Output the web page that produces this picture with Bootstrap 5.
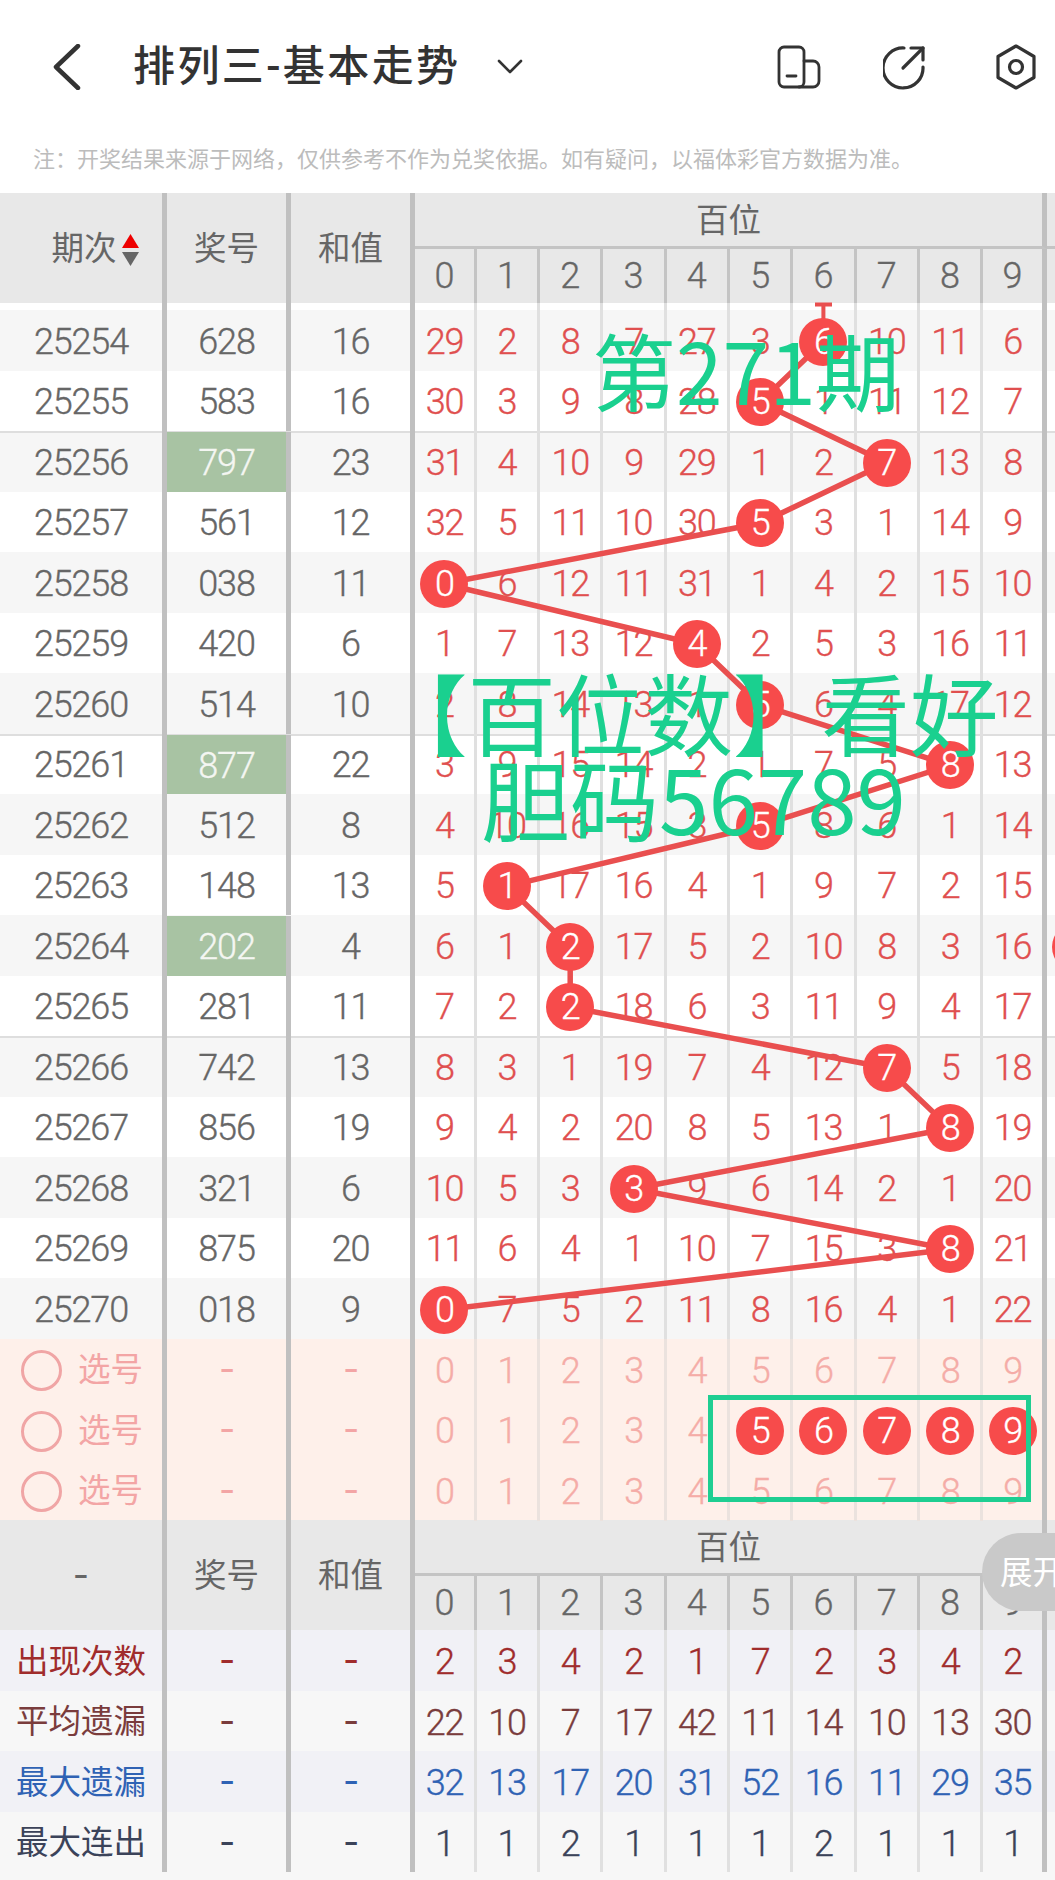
<!DOCTYPE html>
<html lang="zh-CN">
<head>
  <meta charset="UTF-8">
  <title>排列三-基本走势</title>
  <link href="https://cdn.jsdelivr.net/npm/bootstrap@5.3.0/dist/css/bootstrap.min.css" rel="stylesheet">
  <style>
    html, body { overflow: hidden; }
    body { width: 1055px; height: 1880px; background: #f7f7f7; font-family: Roboto, "Noto Sans CJK SC", sans-serif; color: #666; }
    .top-head { height: 134px; background: #fff; }
    .back-icon { margin-left: 53px; }
    .top-title { font-size: 42px; font-weight: 500; color: #333; letter-spacing: 2.4px; margin-left: 52px; line-height: 1; }
    .drop-icon { margin-left: 37px; }
    .share-icon { margin-left: 62px; }
    .hex-icon { margin-left: 68px; margin-right: 18px; }
    .top-note { height: 59px; background: #fff; font-size: 22px; color: #bcbcbc; padding: 10px 0 0 33px; line-height: 32px; }
    .chart-wrap { width: 1055px; overflow: hidden; }
    .trend-row { grid-template-columns: 167px 124px 124px 61.8px repeat(8, 63.3px) 63.8px 1fr; font-size: 36px; font-weight: 300; letter-spacing: -1.2px; height: 60.5px; -webkit-text-stroke: .35px currentColor; }
    .trend-row > div { display: flex; align-items: center; justify-content: center; min-width: 0; padding-top: 3px; }
    .c-main { border-right: 5px solid #c0c0c0; }
    .c-num { border-right: 3px solid #e0e0e0; color: #e04f4f; }
    .c-last { border-right: 5px solid #c0c0c0; color: #e04f4f; }
    .row-even { background: #f6f6f6; }
    .row-odd { background: #fff; }
    .row-group { box-shadow: inset 0 2px 0 #dedede; }
    .row-gap { height: 7px; background: #fff; }
    .hit-cell { background: #a8c3a3; color: #f4f6f2; margin-top: 1px; }
    .ball { width: 48px; height: 48px; flex: none; border-radius: 50%; background: #f74b4b; color: #fff; position: relative; z-index: 2; display: flex; align-items: center; justify-content: center; }
    .ball-edge { margin-left: 5px; }
    .c-rest { justify-content: flex-start !important; }
    .dash-mark { display: block; font-family: "Noto Sans CJK SC", sans-serif; font-size: 44px; font-weight: 400; line-height: 1; margin-bottom: 14px; -webkit-text-stroke: 0; }

    .head-grid { grid-template-columns: 167px 124px 124px 61.8px repeat(8, 63.3px) 63.8px 1fr; grid-template-rows: 56px 54px; background: #e8e8e8; font-size: 32.5px; }
    .head-grid > div { display: flex; align-items: center; justify-content: center; }
    .head-span { grid-row: span 2; padding-top: 3px; }
    .head-pos { grid-column: span 10; border-bottom: 3px solid #c4c4c4; border-right: 5px solid #c0c0c0; padding-top: 4px; }
    .head-end { border-bottom: 3px solid #c4c4c4; }
    .head-num { border-right: 3px solid #c4c4c4; font-size: 36px; font-weight: 300; -webkit-text-stroke: .35px currentColor; }
    .head-last { border-right: 5px solid #c0c0c0; font-size: 36px; font-weight: 300; -webkit-text-stroke: .35px currentColor; }
    .sort-icon { margin-left: 5px; }
    .head-first { padding-left: 28px; }

    .pick-row { background: #fef0ea; color: #f3a5a5; }
    .pick-row .c-num, .pick-row .c-last { color: #f5aca7; }
    .pick-row .c-num { border-right-color: #ebe2de; }
    .pick-first { justify-content: flex-start !important; padding-left: 21px; gap: 16px; font-size: 32.5px; letter-spacing: 0; font-weight: 400; -webkit-text-stroke: 0; }
    .pick-ring { width: 41px; height: 41px; border: 3px solid #f0a5a5; border-radius: 50%; flex: none; }

    .stat-a { background: #f1f1f6; }
    .stat-b { background: #f7f7f7; }
    .stat-label { font-size: 32.5px; letter-spacing: 0; font-weight: 400; -webkit-text-stroke: 0; }
    .clr-1, .clr-1 > div { color: #a02c2c; }
    .clr-2, .clr-2 > div { color: #7a3c3c; }
    .clr-3, .clr-3 > div { color: #2f62b4; }
    .clr-4, .clr-4 > div { color: #3b4359; }

    .line-layer { position: absolute; left: 0; top: 0; z-index: 1; pointer-events: none; }
    .water-text { position: absolute; z-index: 3; line-height: 1; color: #1ad08f; font-family: "Noto Sans CJK SC", sans-serif; white-space: nowrap; pointer-events: none; }
    .water-a { left: 592px; top: 134px; font-size: 84px; }
    .water-b { left: 379px; top: 473px; font-size: 88.500px; }
    .water-c { left: 481px; top: 559px; font-size: 89px; }
    .pick-box { position: absolute; z-index: 3; left: 708px; top: 1202px; width: 323px; height: 107px; border: 5px solid #1fce92; }
    .more-pill { position: absolute; z-index: 4; left: 982px; top: 1340px; width: 130px; height: 78px; border-radius: 39px; background: #c9c9c9; color: #fff; font-size: 32.5px; padding-left: 18px; line-height: 80px; white-space: nowrap; }
  </style>
</head>
<body>
  <div class="top-head d-flex align-items-center">
    <svg class="back-icon" width="28" height="46" viewBox="0 0 28 46" fill="none" stroke="#333" stroke-width="4.5" stroke-linecap="round" stroke-linejoin="round"><path d="M25 2 3 23l22 21"/></svg>
    <div class="top-title">排列三-基本走势</div>
    <svg class="drop-icon" width="26" height="16" viewBox="0 0 26 16" fill="none" stroke="#333" stroke-width="2.6" stroke-linecap="round" stroke-linejoin="round"><path d="M2 2l11 11L24 2"/></svg>
    <div class="ms-auto d-flex align-items-center">
      <svg width="44" height="44" viewBox="0 0 44 44" fill="none" stroke="#333" stroke-width="2.8" stroke-linecap="round" stroke-linejoin="round"><rect x="2" y="2" width="25" height="40" rx="5"/><path d="M27 16h9a6 6 0 0 1 6 6v14a6 6 0 0 1-6 6H22"/><path d="M10 31h9"/></svg>
      <svg class="share-icon" width="44" height="46" viewBox="0 0 44 46" fill="none" stroke="#333" stroke-width="3.2" stroke-linecap="round" stroke-linejoin="round"><path d="M21 4A20 20 0 1 0 40 23"/><path d="M20 24 40 4"/><path d="M28 4h12v12"/></svg>
      <svg class="hex-icon" width="42" height="46" viewBox="0 0 42 46" fill="none" stroke="#333" stroke-width="3.2" stroke-linejoin="round"><path d="M21 2 39 12.500v21L21 44 3 33.500v-21z"/><circle cx="21" cy="23" r="6.500"/></svg>
    </div>
  </div>
  <div class="top-note">注：开奖结果来源于网络，仅供参考不作为兑奖依据。如有疑问，以福体彩官方数据为准。</div>

  <div id="chart" class="chart-wrap position-relative"></div>

  <script>
    let digits = [0, 1, 2, 3, 4, 5, 6, 7, 8, 9];
    let dash = '<span class="dash-mark">-</span>';

    // issue, code, sum, ball position, values
    let rows = [
      ['25254', '628', 16, 6, [29,2,8,7,27,3,6,10,11,6]],
      ['25255', '583', 16, 5, [30,3,9,8,28,5,1,11,12,7]],
      ['25256', '797', 23, 7, [31,4,10,9,29,1,2,7,13,8]],
      ['25257', '561', 12, 5, [32,5,11,10,30,5,3,1,14,9]],
      ['25258', '038', 11, 0, [0,6,12,11,31,1,4,2,15,10]],
      ['25259', '420', 6, 4, [1,7,13,12,4,2,5,3,16,11]],
      ['25260', '514', 10, 5, [2,8,14,13,1,5,6,4,17,12]],
      ['25261', '877', 22, 8, [3,9,15,14,2,1,7,5,8,13]],
      ['25262', '512', 8, 5, [4,10,16,15,3,5,8,6,1,14]],
      ['25263', '148', 13, 1, [5,1,17,16,4,1,9,7,2,15]],
      ['25264', '202', 4, 2, [6,1,2,17,5,2,10,8,3,16]],
      ['25265', '281', 11, 2, [7,2,2,18,6,3,11,9,4,17]],
      ['25266', '742', 13, 7, [8,3,1,19,7,4,12,7,5,18]],
      ['25267', '856', 19, 8, [9,4,2,20,8,5,13,1,8,19]],
      ['25268', '321', 6, 3, [10,5,3,3,9,6,14,2,1,20]],
      ['25269', '875', 20, 8, [11,6,4,1,10,7,15,3,8,21]],
      ['25270', '018', 9, 0, [0,7,5,2,11,8,16,4,1,22]]
    ];
    let hitRows = ['797', '877', '202'];

    let stats = [
      ['出现次数', 'stat-a clr-1', [2,3,4,2,1,7,2,3,4,2]],
      ['平均遗漏', 'stat-b clr-2', [22,10,7,17,42,11,14,10,13,30]],
      ['最大遗漏', 'stat-a clr-3', [32,13,17,20,31,52,16,11,29,35]],
      ['最大连出', 'stat-b clr-4', [1,1,2,1,1,1,2,1,1,1]]
    ];

    let numCells = (fn) => digits.map((d) => `<div class="${d == 9 ? 'c-last' : 'c-num'}">${fn(d)}</div>`).join('');

    let header = (first) => `
      <div class="d-grid head-grid">
        <div class="head-span c-main ${first.cls}">${first.html}</div>
        <div class="head-span c-main">奖号</div>
        <div class="head-span c-main">和值</div>
        <div class="head-pos">百位</div>
        <div class="head-end"></div>
        ${digits.map((d) => `<div class="${d == 9 ? 'head-last' : 'head-num'}">${d}</div>`).join('')}
        <div></div>
      </div>`;

    let html = header({
      cls: 'head-first',
      html: `期次<svg class="sort-icon" width="17" height="32" viewBox="0 0 17 32"><path d="M8.500 0 17 14H0z" fill="#ee0000"/><path d="M0 18h17L8.500 32z" fill="#666"/></svg>`
    });

    html += `<div class="d-grid trend-row row-gap"><div class="c-main"></div><div class="c-main"></div><div class="c-main"></div>${numCells(() => '')}<div></div></div>`;

    rows.forEach((r, i) => {
      let [issue, code, sum, pos, vals] = r;
      let bg = i % 2 == 0 ? 'row-even' : 'row-odd';
      let group = i % 5 == 2 ? 'row-group' : '';
      let hit = hitRows.includes(code) ? 'hit-cell' : '';
      let edge = code == '202' ? '<span class="ball ball-edge"></span>' : '';
      html += `<div class="d-grid trend-row ${bg} ${group}">
        <div class="c-main">${issue}</div>
        <div class="c-main ${hit}">${code}</div>
        <div class="c-main">${sum}</div>
        ${numCells((d) => d == pos ? `<span class="ball">${vals[d]}</span>` : vals[d])}
        <div class="c-rest">${edge}</div>
      </div>`;
    });

    [0, 1, 2].forEach((i) => {
      html += `<div class="d-grid trend-row pick-row">
        <div class="c-main pick-first"><span class="pick-ring"></span><span>选号</span></div>
        <div class="c-main">${dash}</div>
        <div class="c-main">${dash}</div>
        ${numCells((d) => i == 1 && d >= 5 ? `<span class="ball">${d}</span>` : d)}
        <div></div>
      </div>`;
    });

    html += header({ cls: '', html: dash });

    stats.forEach((s) => {
      html += `<div class="d-grid trend-row ${s[1]}">
        <div class="c-main stat-label">${s[0]}</div>
        <div class="c-main">${dash}</div>
        <div class="c-main">${dash}</div>
        ${numCells((d) => s[2][d])}
        <div></div>
      </div>`;
    });

    // broken line through the balls, page coordinates
    let pts = rows.map((r, i) => `${443.6 + 63.3 * r[3]},${341.75 + 60.5 * i}`).join(' ');
    html += `
      <svg class="line-layer" width="1055" height="1687" viewBox="0 193 1055 1687" fill="none" stroke="#e94f4f" stroke-width="5.500">
        <path d="M823.400 304v30M815 304.500h17" stroke-width="4"/>
        <polyline points="${pts}"/>
      </svg>
      <div class="water-text water-a">第271期</div>
      <div class="water-text water-b">【百位数】看好</div>
      <div class="water-text water-c">胆码56789</div>
      <div class="pick-box"></div>
      <div class="more-pill">展开</div>`;

    document.getElementById('chart').innerHTML = html;
  </script>
  <script src="https://cdn.jsdelivr.net/npm/bootstrap@5.3.0/dist/js/bootstrap.bundle.min.js"></script>
</body>
</html>
